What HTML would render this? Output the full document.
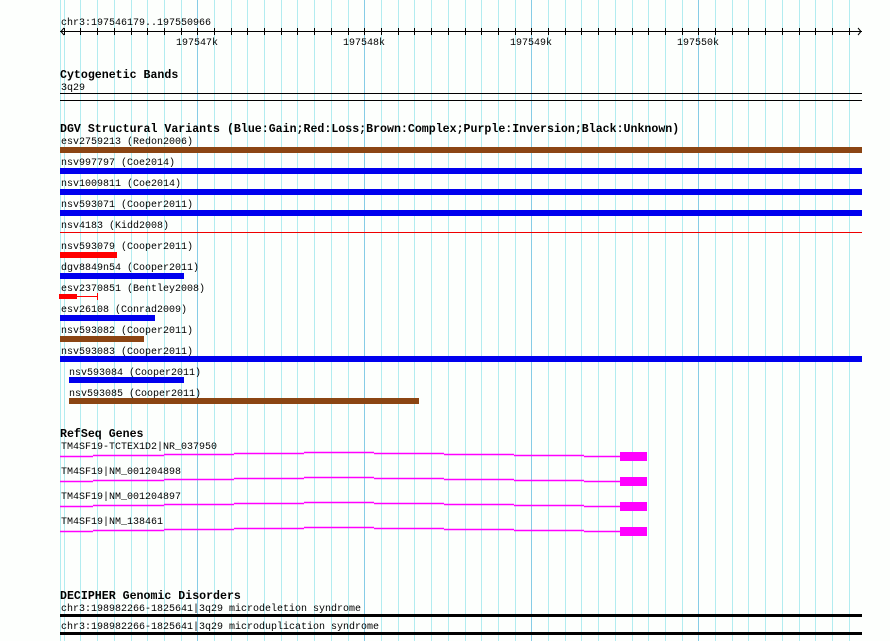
<!DOCTYPE html>
<html><head><meta charset="utf-8"><style>
html,body{margin:0;padding:0;background:#fff;}
svg{display:block;}
text{font-family:"Liberation Mono",monospace;font-size:10px;fill:#000;}
.t{font-weight:bold;font-size:11.6px;}
</style></head><body>
<svg width="890" height="641" xmlns="http://www.w3.org/2000/svg">
<rect width="890" height="641" fill="#fdfffd"/>
<path stroke="#b2ecf0" stroke-width="1" fill="none" d="M60.5 0V641M64.5 0V641M80.5 0V641M97.5 0V641M114.5 0V641M131.5 0V641M147.5 0V641M164.5 0V641M181.5 0V641M214.5 0V641M231.5 0V641M247.5 0V641M264.5 0V641M281.5 0V641M297.5 0V641M314.5 0V641M331.5 0V641M348.5 0V641M381.5 0V641M398.5 0V641M414.5 0V641M431.5 0V641M448.5 0V641M465.5 0V641M481.5 0V641M498.5 0V641M515.5 0V641M548.5 0V641M565.5 0V641M581.5 0V641M598.5 0V641M615.5 0V641M632.5 0V641M648.5 0V641M665.5 0V641M682.5 0V641M715.5 0V641M732.5 0V641M748.5 0V641M765.5 0V641M782.5 0V641M799.5 0V641M815.5 0V641M832.5 0V641M849.5 0V641"/>
<path stroke="#86cce6" stroke-width="1" fill="none" d="M197.5 0V641M364.5 0V641M531.5 0V641M698.5 0V641"/>
<path stroke="#000" stroke-width="1" fill="none" d="M64.5 28V35M80.5 28V35M97.5 28V35M114.5 28V35M131.5 28V35M147.5 28V35M164.5 28V35M181.5 28V35M197.5 28V35M214.5 28V35M231.5 28V35M247.5 28V35M264.5 28V35M281.5 28V35M297.5 28V35M314.5 28V35M331.5 28V35M348.5 28V35M364.5 28V35M381.5 28V35M398.5 28V35M414.5 28V35M431.5 28V35M448.5 28V35M465.5 28V35M481.5 28V35M498.5 28V35M515.5 28V35M531.5 28V35M548.5 28V35M565.5 28V35M581.5 28V35M598.5 28V35M615.5 28V35M632.5 28V35M648.5 28V35M665.5 28V35M682.5 28V35M698.5 28V35M715.5 28V35M732.5 28V35M748.5 28V35M765.5 28V35M782.5 28V35M799.5 28V35M815.5 28V35M832.5 28V35M849.5 28V35"/>
<!-- ruler -->
<text x="61" y="25">chr3:197546179..197550966</text>
<line x1="60" y1="31.5" x2="862" y2="31.5" stroke="#000"/>
<path d="M64 28L61 31.5L64 35M858 28L861 31.5L858 35" stroke="#000" fill="none"/>
<text x="197" y="45" text-anchor="middle">197547k</text>
<text x="364" y="45" text-anchor="middle">197548k</text>
<text x="531" y="45" text-anchor="middle">197549k</text>
<text x="698" y="45" text-anchor="middle">197550k</text>
<!-- cyto -->
<text class="t" x="60" y="78">Cytogenetic Bands</text>
<text x="61" y="90">3q29</text>
<rect x="60" y="93" width="802" height="1" fill="#000"/>
<rect x="60" y="100" width="802" height="1" fill="#000"/>
<!-- DGV -->
<text class="t" x="60" y="132">DGV Structural Variants (Blue:Gain;Red:Loss;Brown:Complex;Purple:Inversion;Black:Unknown)</text>
<text x="61" y="144">esv2759213 (Redon2006)</text>
<rect x="60" y="147" width="802" height="6" fill="#8b4513"/>
<text x="61" y="165">nsv997797 (Coe2014)</text>
<rect x="60" y="168" width="802" height="6" fill="#0000ee"/>
<text x="61" y="186">nsv1009811 (Coe2014)</text>
<rect x="60" y="189" width="802" height="6" fill="#0000ee"/>
<text x="61" y="207">nsv593071 (Cooper2011)</text>
<rect x="60" y="210" width="802" height="6" fill="#0000ee"/>
<text x="61" y="228">nsv4183 (Kidd2008)</text>
<rect x="60" y="232" width="802" height="1" fill="#ee0000"/>
<text x="61" y="249">nsv593079 (Cooper2011)</text>
<rect x="60" y="252" width="57" height="6" fill="#ff0000"/>
<text x="61" y="270">dgv8849n54 (Cooper2011)</text>
<rect x="60" y="273" width="124" height="6" fill="#0000ee"/>
<text x="61" y="291">esv2370851 (Bentley2008)</text>
<rect x="59" y="294" width="18" height="5" fill="#ff0000"/>
<path d="M77 296.5H97M97.5 293V300" stroke="#ff0000" stroke-width="1"/>
<text x="61" y="312">esv26108 (Conrad2009)</text>
<rect x="60" y="315" width="95" height="6" fill="#0000ee"/>
<text x="61" y="333">nsv593082 (Cooper2011)</text>
<rect x="60" y="336" width="84" height="6" fill="#8b4513"/>
<text x="61" y="354">nsv593083 (Cooper2011)</text>
<rect x="60" y="356" width="802" height="6" fill="#0000ee"/>
<text x="69" y="375">nsv593084 (Cooper2011)</text>
<rect x="69" y="377" width="115" height="6" fill="#0000ee"/>
<text x="69" y="396">nsv593085 (Cooper2011)</text>
<rect x="69" y="398" width="350" height="6" fill="#8b4513"/>
<!-- RefSeq -->
<text class="t" x="60" y="437">RefSeq Genes</text>
<text x="61" y="449">TM4SF19-TCTEX1D2|NR_037950</text>
<text x="61" y="474">TM4SF19|NM_001204898</text>
<text x="61" y="499">TM4SF19|NM_001204897</text>
<text x="61" y="524">TM4SF19|NM_138461</text>
<path stroke="#ff00ff" stroke-width="1.5" fill="none" d="M60 456.5H93M93 455.5H164M164 454.5H234M234 453.5H304M304 452.5H374M374 453.5H444M444 454.5H514M514 455.5H584M584 456.5H620"/>
<path stroke="#ff00ff" stroke-width="1.5" fill="none" d="M60 481.5H93M93 480.5H164M164 479.5H234M234 478.5H304M304 477.5H374M374 478.5H444M444 479.5H514M514 480.5H584M584 481.5H620"/>
<path stroke="#ff00ff" stroke-width="1.5" fill="none" d="M60 506.5H93M93 505.5H164M164 504.5H234M234 503.5H304M304 502.5H374M374 503.5H444M444 504.5H514M514 505.5H584M584 506.5H620"/>
<path stroke="#ff00ff" stroke-width="1.5" fill="none" d="M60 531.5H93M93 530.5H164M164 529.5H234M234 528.5H304M304 527.5H374M374 528.5H444M444 529.5H514M514 530.5H584M584 531.5H620"/>
<rect x="620" y="452" width="27" height="9" fill="#ff00ff"/>
<rect x="620" y="477" width="27" height="9" fill="#ff00ff"/>
<rect x="620" y="502" width="27" height="9" fill="#ff00ff"/>
<rect x="620" y="527" width="27" height="9" fill="#ff00ff"/>
<!-- DECIPHER -->
<text class="t" x="60" y="599">DECIPHER Genomic Disorders</text>
<text x="61" y="611">chr3:198982266-1825641|3q29 microdeletion syndrome</text>
<rect x="60" y="614" width="802" height="3" fill="#000"/>
<text x="61" y="629">chr3:198982266-1825641|3q29 microduplication syndrome</text>
<rect x="60" y="632" width="802" height="3" fill="#000"/>
</svg>
</body></html>
